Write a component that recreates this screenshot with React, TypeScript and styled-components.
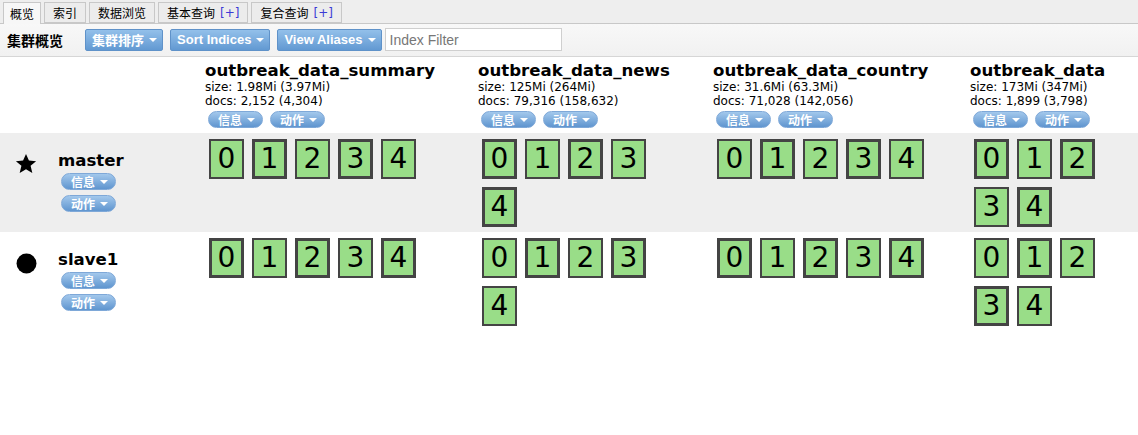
import React from "react";
import styled, { createGlobalStyle } from "styled-components";

const Global = createGlobalStyle`
  html, body { margin: 0; padding: 0; background: #fff; }
  body { font-family: "DejaVu Sans", "Noto Sans CJK SC", sans-serif; font-size: 12px; color: #000; }
  * { box-sizing: border-box; }
`;

const CJK = `"DejaVu Sans", "Noto Sans CJK SC", sans-serif`;

const TabBar = styled.div`
  display: flex;
  align-items: flex-end;
  gap: 3px;
  height: 24px;
  padding-left: 3px;
  background: #eeeeee;
  border-bottom: 1px solid #c8c8c8;
`;

const Tab = styled.div<{ $active?: boolean }>`
  height: ${(p) => (p.$active ? "22px" : "21px")};
  margin-bottom: ${(p) => (p.$active ? "-1px" : "0")};
  padding: 0 ${(p) => (p.$active ? "6px" : "8px")};
  display: flex;
  align-items: center;
  border: 1px solid #c8c8c8;
  border-bottom: ${(p) => (p.$active ? "none" : "1px solid #c8c8c8")};
  background: ${(p) => (p.$active ? "#f7f7f7" : "#ececec")};
  font: 12px ${CJK};
  color: #000;
  white-space: pre;
`;

const Plus = styled.span`
  color: #3b3bd6;
  margin-left: 5px;
`;

const Toolbar = styled.div`
  display: flex;
  align-items: center;
  height: 33px;
  padding: 0 0 1px 7px;
  background: linear-gradient(#f8f8f8, #f1f1f1);
  border-bottom: 1px solid #d6d6d6;
`;

const Title = styled.div`
  font: bold 14px ${CJK};
  width: 78px;
`;

const DropButton = styled.div`
  height: 22px;
  margin-right: 7px;
  padding: 0 5px 0 6px;
  display: inline-flex;
  align-items: center;
  gap: 5px;
  border: 1px solid #5f92c9;
  border-radius: 2px;
  background: linear-gradient(#93c0ea, #6299d2);
  color: #fff;
  font: bold 13px "Liberation Sans", "Noto Sans CJK SC", sans-serif;
  white-space: nowrap;
`;

const Caret = styled.span`
  width: 0;
  height: 0;
  border-left: 4px solid transparent;
  border-right: 4px solid transparent;
  border-top: 4px solid #fff;
`;

const FilterInput = styled.input`
  width: 177px;
  height: 23px;
  margin-left: -4px;
  padding: 0 4px;
  border: 1px solid #cfcfcf;
  background: #fff;
  font: 14px "Liberation Sans", sans-serif;
  outline: none;
  &::placeholder { color: #777; }
`;

const Row = styled.div<{ $bg?: string }>`
  display: grid;
  grid-template-columns: 205px 273px 235px 257px 168px;
  background: ${(p) => p.$bg || "transparent"};
`;

const HeaderCell = styled.div`
  padding: 4px 0 5px 0;
  display: flex;
  flex-direction: column;
`;

const IndexName = styled.div`
  font: bold 16.6px "DejaVu Sans", sans-serif;
  line-height: 19px;
`;

const Stat = styled.div`
  font: 12px "DejaVu Sans", sans-serif;
  line-height: 14px;
  white-space: nowrap;
`;

const PillRow = styled.div`
  display: flex;
  gap: 7px;
  margin: 3px 0 0 3px;
`;

const Pill = styled.div`
  height: 17px;
  width: 55px;
  padding: 0 7px 0 9px;
  display: inline-flex;
  align-items: center;
  justify-content: space-between;
  border: 1px solid #7ea8d8;
  border-radius: 9px;
  background: linear-gradient(#a3c8ec, #5f95cf);
  color: #fff;
  font: bold 12px "Noto Sans CJK SC", sans-serif;
  line-height: 15px;
`;

const NodeCell = styled.div`
  display: flex;
  padding: 20px 0 0 16px;
`;

const IconBox = styled.div`
  width: 42px;
  display: flex;
  justify-content: flex-start;
`;

const NodeInfo = styled.div`
  display: flex;
  flex-direction: column;
  gap: 5px;
`;

const NodeName = styled.div`
  font: bold 16.6px "DejaVu Sans", sans-serif;
  line-height: 15px;
  height: 15px;
`;

const NodePill = styled(Pill)`
  margin-left: 3px;
`;

const Shards = styled.div`
  display: flex;
  flex-wrap: wrap;
  align-content: flex-start;
  padding: 2px 25px 1px 0;
`;

const Shard = styled.div<{ $primary: boolean }>`
  width: 35px;
  height: 40px;
  margin: 4px;
  border: ${(p) => (p.$primary ? 3 : 2)}px solid #444;
  background: #99dd88;
  display: flex;
  align-items: center;
  justify-content: center;
  font: 28px "DejaVu Sans", sans-serif;
  line-height: 1;
`;

const Star = () => (
  <svg width="22" height="22" viewBox="0 0 24 24" style={{ marginLeft: -1 }}>
    <path d="M12 1l3.2 7.3 7.8.6-6 5.1 1.9 7.8L12 17.6l-6.9 4.2 1.9-7.8-6-5.1 7.8-.6z" fill="#000" />
  </svg>
);

const Dot = () => (
  <svg width="21" height="21" viewBox="0 0 20 20" style={{ marginTop: 1 }}>
    <circle cx="10" cy="10" r="9.5" fill="#000" />
  </svg>
);

const indices = [
  { name: "outbreak_data_summary", size: "1.98Mi (3.97Mi)", docs: "2,152 (4,304)", masterPrimary: [1, 3] },
  { name: "outbreak_data_news", size: "125Mi (264Mi)", docs: "79,316 (158,632)", masterPrimary: [0, 2, 4] },
  { name: "outbreak_data_country", size: "31.6Mi (63.3Mi)", docs: "71,028 (142,056)", masterPrimary: [1, 3] },
  { name: "outbreak_data", size: "173Mi (347Mi)", docs: "1,899 (3,798)", masterPrimary: [0, 2, 4] },
];

const PillLabel = ({ label }: { label: string }) => (
  <>
    <span>{label}</span>
    <Caret />
  </>
);

const nodes = [
  { name: "master", master: true },
  { name: "slave1", master: false },
];

export default function App() {
  return (
    <>
      <Global />
      <TabBar>
        <Tab $active>概览</Tab>
        <Tab>索引</Tab>
        <Tab>数据浏览</Tab>
        <Tab>
          基本查询<Plus>[+]</Plus>
        </Tab>
        <Tab>
          复合查询<Plus>[+]</Plus>
        </Tab>
      </TabBar>
      <Toolbar>
        <Title>集群概览</Title>
        <DropButton>
          集群排序<Caret />
        </DropButton>
        <DropButton>
          Sort Indices<Caret />
        </DropButton>
        <DropButton>
          View Aliases<Caret />
        </DropButton>
        <FilterInput placeholder="Index Filter" />
      </Toolbar>
      <Row>
        <div />
        {indices.map((ix) => (
          <HeaderCell key={ix.name}>
            <IndexName>{ix.name}</IndexName>
            <Stat>size: {ix.size}</Stat>
            <Stat>docs: {ix.docs}</Stat>
            <PillRow>
              <Pill>
                <PillLabel label="信息" />
              </Pill>
              <Pill>
                <PillLabel label="动作" />
              </Pill>
            </PillRow>
          </HeaderCell>
        ))}
      </Row>
      {nodes.map((n) => (
        <Row key={n.name} $bg={n.master ? "#eeeeee" : undefined}>
          <NodeCell>
            <IconBox>{n.master ? <Star /> : <Dot />}</IconBox>
            <NodeInfo>
              <NodeName>{n.name}</NodeName>
              <NodePill>
                <PillLabel label="信息" />
              </NodePill>
              <NodePill>
                <PillLabel label="动作" />
              </NodePill>
            </NodeInfo>
          </NodeCell>
          {indices.map((ix) => (
            <Shards key={ix.name}>
              {[0, 1, 2, 3, 4].map((s) => {
                const inMaster = ix.masterPrimary.includes(s);
                const primary = n.master ? inMaster : !inMaster;
                return (
                  <Shard key={s} $primary={primary}>
                    {s}
                  </Shard>
                );
              })}
            </Shards>
          ))}
        </Row>
      ))}
    </>
  );
}
